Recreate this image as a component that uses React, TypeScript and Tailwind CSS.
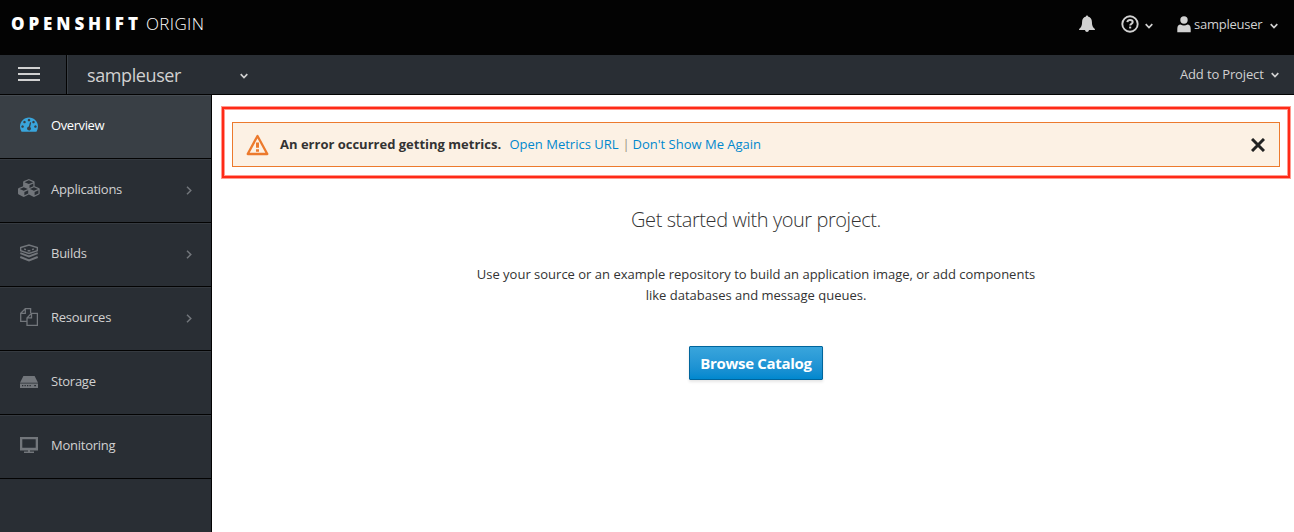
import React from "react";

const Chevron = ({ className = "" }: { className?: string }) => (
  <svg className={className} width="8" height="6" viewBox="0 0 8 6" fill="none" stroke="currentColor" strokeWidth="1.7">
    <path d="M.7 1.2 4 4.5 7.3 1.2" />
  </svg>
);

const Gauge = () => (
  <svg className="mb-0.5" width="18" height="18" viewBox="0 0 1792 1792" fill="#39a5dc">
    <path d="M384 1152q0-53-37.5-90.5t-90.5-37.5-90.5 37.500-37.500 90.500 37.500 90.500 90.500 37.500 90.500-37.500 37.500-90.500zm192-448q0-53-37.500-90.500t-90.500-37.500-90.500 37.500-37.500 90.500 37.500 90.500 90.500 37.500 90.500-37.500 37.500-90.500zm428 481l101-382q6-26-7.500-48.500t-38.500-29.500-48 6.500-30 39.500l-101 382q-60 5-107 43.500t-63 98.500q-20 77 20 146t117 89 146-20 89-117q16-60-6-117t-72-91zm660-33q0-53-37.500-90.500t-90.500-37.500-90.500 37.500-37.500 90.500 37.500 90.500 90.500 37.500 90.500-37.500 37.500-90.500zm-640-640q0-53-37.500-90.500t-90.500-37.500-90.500 37.500-37.500 90.500 37.500 90.500 90.500 37.500 90.500-37.500 37.500-90.500zm448 192q0-53-37.500-90.500t-90.500-37.500-90.500 37.500-37.500 90.500 37.500 90.500 90.500 37.500 90.500-37.500 37.500-90.500zm320 448q0 261-141 483-19 29-54 29h-1402q-35 0-54-29-141-221-141-483 0-182 71-348t191-286 286-191 348-71 348 71 286 191 191 286 71 348z" />
  </svg>
);

const Cubes = () => (
  <svg width="23" height="18" viewBox="0 0 2304 1792" fill="currentColor" className="mb-0.5 shrink-0">
    <path d="M640 1632l384-192v-314l-384 164v342zm-64-454l404-173-404-173-404 173zm1088 454l384-192v-314l-384 164v342zm-64-454l404-173-404-173-404 173zm-448-293l384-165v-266l-384 164v267zm-64-379l441-189-441-189-441 189zm1088 518v416q0 36-19 67t-52 47l-448 224q-25 14-57 14t-57-14l-448-224q-4-2-7-4-2 2-7 4l-448 224q-25 14-57 14t-57-14l-448-224q-33-16-52-47t-19-67v-416q0-38 21.500-70t56.500-48l434-186v-400q0-38 21.500-70t56.500-48l448-192q23-10 50-10t50 10l448 192q35 16 56.500 48t21.500 70v400l434 186q36 16 57 48t21 70z" />
  </svg>
);

const Build = () => (
  <svg width="18" height="18" viewBox="0 0 18 18" fill="none" stroke="currentColor" strokeWidth="1.4">
    <path d="M.7 3.500 9 1l8.300 2.500v3.200L9 9.500.7 6.700z" />
    <path d="M4.200 5 6 5.600M7.600 6.500 9 7l1.400-.5M12 5.600l1.800-.6" strokeWidth="1.400" />
    <path d="M.3 9.200 9 12.400l8.700-3.200M.3 13 9 16.500l8.700-3.500" strokeWidth="1.900" />
  </svg>
);

const Files = () => (
  <svg width="18" height="18" viewBox="0 0 18 18" fill="none" stroke="currentColor" strokeWidth="1.300">
    <path d="M7 13.400H.7V5.300L5.300.7h5.300v4.600M5.300.7v4.600H.7" />
    <path d="M7 9.900 11.500 5.300h5.900v12H7zM11.500 5.300v4.600H7" />
  </svg>
);

const Drive = () => (
  <svg className="mt-0.5" width="18" height="18" viewBox="0 0 18 18" fill="currentColor">
    <path d="M3.400 3h11.200L18 9.700H0z" />
    <path fillRule="evenodd" d="M0 10.500h18V15H0zM2 12v1.300h1.300V12zm2.500 0v1.300h1.300V12zM7 12v1.300h1.300V12zm2.500 0v1.300h1.300V12zm4.700 0v1.300h1.800V12z" />
  </svg>
);

const Screen = () => (
  <svg width="18" height="18" viewBox="0 0 18 18" fill="currentColor">
    <path fillRule="evenodd" d="M0 1h18v13.500H0zM2.300 3.300v8.400h13.400V3.300z" />
    <path d="M8 14h2v1.500h4V17H4v-1.500h4z" />
  </svg>
);

const items = [
  { label: "Overview", icon: <Gauge />, active: true },
  { label: "Applications", icon: <Cubes />, more: true },
  { label: "Builds", icon: <Build />, more: true },
  { label: "Resources", icon: <Files />, more: true },
  { label: "Storage", icon: <Drive /> },
  { label: "Monitoring", icon: <Screen /> },
];

export default function App() {
  return (
    <div className="flex h-screen w-full flex-col overflow-hidden bg-white font-['Open_Sans',sans-serif] text-[13px] text-[#333]">
      <header className="flex h-[55px] shrink-0 items-start justify-between bg-[#030303] pr-4 pl-[11px] text-[#d1d1d1]">
        <div className="mt-[13px] flex text-[17px] leading-[22px] whitespace-pre text-white">
          <span className="w-[135px] font-extrabold tracking-[3.9px]">OPENSHIFT</span>
          <span className="font-light tracking-[0.35px]">ORIGIN</span>
        </div>
        <div className="mt-[14px] flex h-5 items-center">
          <svg width="16" height="18" viewBox="0 0 16 18" fill="currentColor">
            <path d="M8 .5c.7 0 1 .4 1 1 2.700.6 3.900 2.700 3.900 5.200 0 3.900.9 5.700 3 7.400v1H10c-.2 1.300-1 2-2 2s-1.800-.7-2-2H.1v-1c2.100-1.700 3-3.500 3-7.400C3.100 4.200 4.300 2.100 7 1.500c0-.6.300-1 1-1z" />
          </svg>
          <svg className="ml-[26px]" width="18" height="18" viewBox="0 0 18 18" fill="none" stroke="currentColor">
            <circle cx="9" cy="9" r="7.700" strokeWidth="1.900" />
            <path d="M6.300 7.100c.3-1.500 1.300-2.200 2.700-2.200 1.500 0 2.700.8 2.700 2.200 0 1.800-2.500 1.700-2.500 3.300" strokeWidth="2" />
            <path d="M8.100 12.500h2.100" strokeWidth="1.900" />
          </svg>
          <Chevron className="mt-[3px] ml-[6px]" />
          <svg className="ml-[24px]" width="14" height="17" viewBox="0 0 14 17" fill="currentColor">
            <circle cx="7" cy="4" r="3.700" />
            <path d="M.3 16.300v-3.600c0-3 1.500-4.200 3.200-4.200 2 1.200 5 1.200 7 0 1.700 0 3.200 1.200 3.200 4.200v3.600z" />
          </svg>
          <span className="ml-[3px] w-[69px] pt-0.5 tracking-[-0.25px] whitespace-nowrap">sampleuser</span>
          <Chevron className="mt-[3px] ml-[7px]" />
        </div>
      </header>
      <nav className="flex h-10 shrink-0 items-center border-b border-[#030303] bg-[#292e34] pr-[15px] text-[#d1d1d1]">
        <button className="flex h-full w-[67px] items-center border-r border-[#030303] pb-px pl-[18px]" aria-label="Menu">
          <span className="flex w-[22px] flex-col gap-1">
            <span className="h-0.5 bg-[#d1d1d1]" />
            <span className="h-0.5 bg-[#d1d1d1]" />
            <span className="h-0.5 bg-[#d1d1d1]" />
          </span>
        </button>
        <div className="flex h-full flex-1 items-center border-l border-[#3a4046] pl-[19px]">
          <span className="w-[153px] pt-0.5 text-[18px] tracking-[-0.4px]">sampleuser</span>
          <Chevron className="mt-0.5" />
        </div>
        <span className="w-[84px] tracking-[-0.15px] whitespace-nowrap">Add to Project</span>
        <Chevron className="mt-px ml-[7px]" />
      </nav>
      <div className="flex min-h-0 flex-1">
        <aside className="w-[212px] shrink-0 border-r border-[#030303] bg-[#292e34] text-[#72767b]">
          {items.map((item) => (
            <div
              key={item.label}
              className={
                "flex h-16 items-center border-t border-b border-b-[#030303] pr-[19px] " +
                (item.active ? "border-t-[#464c52] bg-[#393f45]" : "border-t-[#353a40]")
              }
            >
              <span className="flex w-[51px] shrink-0 justify-center pr-px pb-1 pl-2">{item.icon}</span>
              <span
                className={
                  "flex-1 pb-0.5 " + (item.active ? "font-medium tracking-[-0.4px] text-white" : "tracking-[-0.25px] text-[#d1d1d1]")
                }
              >
                {item.label}
              </span>
              {item.more && (
                <svg className="mb-0.5" width="6" height="9" viewBox="0 0 6 9" fill="none" stroke="currentColor" strokeWidth="1.500">
                  <path d="M1 .8 4.800 4.500 1 8.200" />
                </svg>
              )}
            </div>
          ))}
        </aside>
        <main className="flex flex-1 flex-col pt-[11px] pr-[3px] pl-[9px]">
          <div className="border border-[#ff9a90]">
            <div className="border-2 border-[#ff2a17]">
              <div className="border border-[#ff9a90] px-[7px] pt-3 pb-2">
                <div className="flex h-[45px] items-center border border-[#ec7a2d] bg-[#fcf1e4] pr-3.5 pl-[13px]">
                  <svg width="23" height="22" viewBox="0 0 23 22" fill="none" stroke="#ec7a2d">
                    <path d="M11.500 2 21.300 20H1.700z" strokeWidth="2.300" strokeLinejoin="round" />
                    <path d="M11.500 8.500v5.200M11.500 15.200v2.600" strokeWidth="3" />
                  </svg>
                  <strong className="ml-[11px] w-[229.5px] font-bold whitespace-nowrap">An error occurred getting metrics.</strong>
                  <a className="w-[113px] whitespace-nowrap text-[#0088ce]">Open Metrics URL</a>
                  <span className="w-[10px] text-[#99917f]">|</span>
                  <a className="whitespace-nowrap text-[#0088ce]">Don't Show Me Again</a>
                  <svg className="ml-auto" width="14" height="14" viewBox="0 0 14 14" stroke="#222" strokeWidth="3">
                    <path d="m1 1 12 12M13 1 1 13" />
                  </svg>
                </div>
              </div>
            </div>
          </div>
          <section className="flex flex-col items-center pt-[28px] text-center">
            <h1 className="text-[20px] leading-[26px] font-light tracking-[-0.43px] whitespace-nowrap">Get started with your project.</h1>
            <p className="mt-[31px] leading-[21px] whitespace-nowrap">
              Use your source or an example repository to build an application image, or add components
              <br />
              like databases and message queues.
            </p>
            <button className="mt-[40px] h-[34px] w-[134px] rounded-[1px] border border-[#00659c] bg-linear-to-b from-[#39a5dc] to-[#0088ce] text-[15px] font-bold tracking-[-0.3px] whitespace-nowrap text-white shadow-[0_2px_3px_rgba(3,3,3,0.1)]">
              Browse Catalog
            </button>
          </section>
        </main>
      </div>
    </div>
  );
}
